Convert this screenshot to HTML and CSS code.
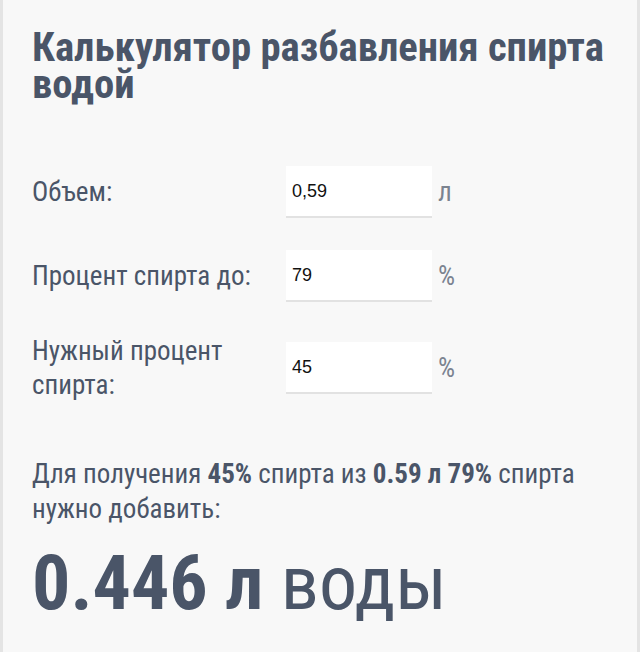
FILE: index.html
```html
<!DOCTYPE html>
<html lang="ru">
<head>
<meta charset="utf-8">
<title>Калькулятор разбавления спирта водой</title>
<link rel="stylesheet" href="styles.css">
</head>
<body>
<section class="calc">
  <h1 class="calc-title">Калькулятор разбавления спирта водой</h1>

  <div class="calc-form">
    <label class="calc-label" for="volume">Объем:</label>
    <input class="calc-input" id="volume" type="text" value="0,59">
    <span class="calc-unit">л</span>

    <label class="calc-label" for="strength-from">Процент спирта до:</label>
    <input class="calc-input" id="strength-from" type="text" value="79">
    <span class="calc-unit">%</span>

    <label class="calc-label" for="strength-to">Нужный процент спирта:</label>
    <input class="calc-input" id="strength-to" type="text" value="45">
    <span class="calc-unit">%</span>
  </div>

  <p class="calc-summary">Для получения <b>45%</b> спирта из <b>0.59 л</b> <b>79%</b> спирта нужно добавить:</p>
  <p class="calc-result"><b>0.446 л</b> воды</p>
</section>
</body>
</html>
```
FILE: styles.css
```css
html, body {
  margin: 0;
  padding: 0;
}

body {
  background: #f8f8f8;
  font-family: "Roboto Condensed", "Liberation Sans Narrow", Roboto, sans-serif;
  color: #4a5568;
}

.calc {
  box-sizing: border-box;
  min-height: 652px;
  padding: 29px 29px;
  background: #f8f8f8;
  border-left: 3px solid #e4e4e4;
  border-right: 3px solid #e4e4e4;
}

.calc-title {
  margin: 0 0 63px;
  font-size: 40.7px;
  line-height: 37px;
  font-weight: 700;
  color: #4a5568;
}

.calc-form {
  display: grid;
  grid-template-columns: 254px 146px auto;
  row-gap: 32px;
  align-items: center;
}

.calc-label {
  font-size: 27px;
  line-height: 34px;
  color: #4a5568;
  padding-right: 16px;
}

.calc-input {
  box-sizing: border-box;
  width: 146px;
  height: 52px;
  margin: 0;
  padding: 0 6px;
  border: 0;
  border-bottom: 2px solid #e2e2e2;
  background: #fff;
  font-family: "Liberation Sans", Arial, sans-serif;
  font-size: 18px;
  color: #111;
  outline: none;
}

.calc-unit {
  padding-left: 6px;
  font-size: 27px;
  color: #7b8390;
}

.calc-summary {
  margin: 55px 0 17px;
  font-size: 27px;
  line-height: 35px;
  color: #4a5568;
}

.calc-summary b {
  font-weight: 700;
}

.calc-result {
  margin: 0;
  font-size: 76px;
  line-height: 78px;
  color: #4a5568;
}

.calc-result b {
  font-weight: 700;
}
```
